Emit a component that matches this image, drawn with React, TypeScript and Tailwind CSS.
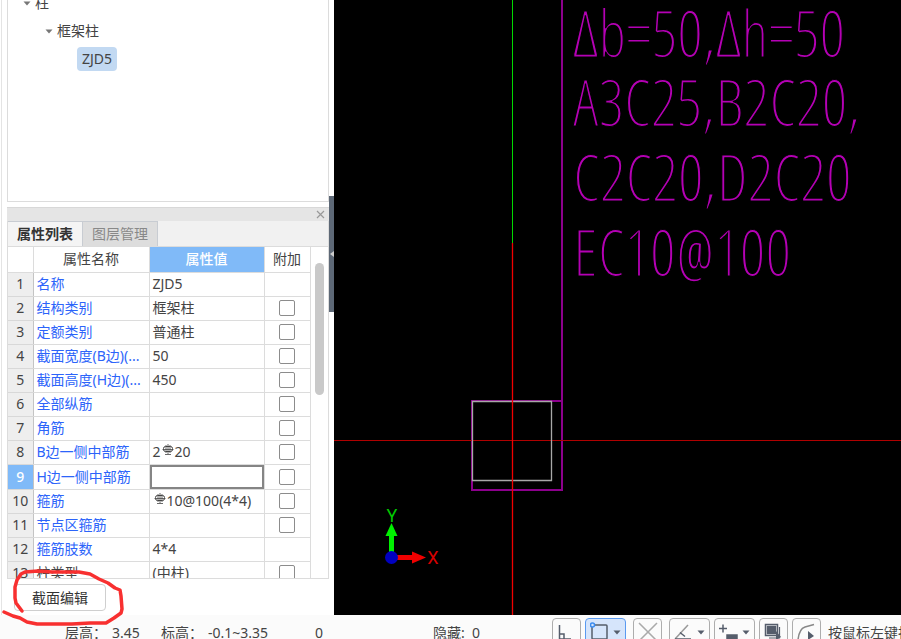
import type { ReactNode } from 'react';

interface PropertyRow {
  name: string;
  value?: string;
  rebar?: [string, string];
  check?: boolean;
  plain?: boolean;
}

const rows: PropertyRow[] = [
  { name: '名称', value: 'ZJD5' },
  { name: '结构类别', value: '框架柱', check: true },
  { name: '定额类别', value: '普通柱', check: true },
  { name: '截面宽度(B边)(...', value: '50', check: true },
  { name: '截面高度(H边)(...', value: '450', check: true },
  { name: '全部纵筋', check: true },
  { name: '角筋', check: true },
  { name: 'B边一侧中部筋', rebar: ['2', '20'], check: true },
  { name: 'H边一侧中部筋', check: true },
  { name: '箍筋', rebar: ['', '10@100(4*4)'], check: true },
  { name: '节点区箍筋', check: true },
  { name: '箍筋肢数', value: '4*4' },
  { name: '柱类型', value: '(中柱)', check: true, plain: true },
];

const SELECTED = 8;

const notes = [
  { text: 'Δb=50,Δh=50', y: 57 },
  { text: 'A3C25,B2C20,', y: 126 },
  { text: 'C2C20,D2C20', y: 201 },
  { text: 'EC10@100', y: 276 },
];

const Caret = ({ className = '' }: { className?: string }) => (
  <svg className={`shrink-0 ${className}`} width="8" height="5" viewBox="0 0 8 5">
    <path d="M0.5 0.5h7L4 4.5z" fill="currentColor" />
  </svg>
);

const RebarIcon = () => (
  <svg className="mb-1.5 inline-block" width="14" height="12" viewBox="0 0 14 12" fill="none" stroke="#444">
    <path d="M4.5 2.5h5a2 2 0 0 1 2 2v1a2 2 0 0 1-2 2h-5a2 2 0 0 1-2-2v-1a2 2 0 0 1 2-2z" />
    <path d="M7 0v10M5 1v8M9 1v8M1.5 5.5h11M4 10.5h6" strokeWidth="0.8" />
  </svg>
);

const TreePanel = () => (
  <div className="h-[202px] shrink-0 overflow-hidden border border-t-0 border-[#dcdcdc] bg-white text-sm text-[#444]">
    <ul className="-mt-[11px]">
      <li>
        <div className="flex h-7 items-center gap-1 pl-[15px]">
          <Caret className="text-[#777]" />
          柱
        </div>
        <ul>
          <li>
            <div className="flex h-7 items-center gap-1 pl-[37px]">
              <Caret className="text-[#777]" />
              框架柱
            </div>
            <ul>
              <li className="flex h-7 items-center pl-[69px]">
                <button className="h-6 w-10 rounded-sm bg-[#c2d9f2] text-center">ZJD5</button>
              </li>
            </ul>
          </li>
        </ul>
      </li>
    </ul>
  </div>
);

const PropertyTable = () => (
  <div className="flex min-h-0 flex-1 overflow-hidden border border-t-0 border-[#dcdcdc] bg-white">
    <table className="w-[302px] shrink-0 table-fixed border-collapse self-start text-sm leading-5 text-[#444]">
      <colgroup>
        <col className="w-[25px]" />
        <col className="w-[116px]" />
        <col className="w-[115px]" />
        <col className="w-[46px]" />
      </colgroup>
      <thead>
        <tr className="h-[25px]">
          <th className="border-r border-b border-[#dcdcdc]" />
          <th className="border-r border-b border-[#dcdcdc] p-0 font-normal">属性名称</th>
          <th className="border-r border-b border-[#dcdcdc] bg-[#80baf8] p-0 font-medium text-white">属性值</th>
          <th className="border-r border-b border-[#dcdcdc] p-0 font-normal">附加</th>
        </tr>
      </thead>
      <tbody>
        {rows.map((row, i) => (
          <tr key={row.name} className="h-6">
            <td className={`border-r border-b border-r-[#c4c4c4] border-b-[#d8d8d8] p-0 text-center ${i === SELECTED ? 'bg-[#80baf8] font-medium text-white' : 'bg-[#eeeeee]'}`}>
              {i + 1}
            </td>
            <td className={`border-r border-b border-[#dcdcdc] py-0 pr-0 pl-[3px] whitespace-nowrap ${row.plain ? '' : 'text-[#2c64fa]'}`}>
              {row.name}
            </td>
            <td className="border-r border-b border-[#dcdcdc] p-0 whitespace-nowrap">
              {i === SELECTED ? (
                <input aria-label={row.name} className="block h-6 w-full border-2 border-[#858585] bg-white px-1 outline-none" />
              ) : (
                <span className="pl-[3px]">
                  {row.rebar ? (
                    <>
                      {row.rebar[0]}
                      <RebarIcon />
                      {row.rebar[1]}
                    </>
                  ) : (
                    row.value
                  )}
                </span>
              )}
            </td>
            <td className="border-r border-b border-[#dcdcdc] p-0">
              {row.check && (
                <input
                  type="checkbox"
                  aria-label={`附加 ${row.name}`}
                  className="mx-auto block size-4 appearance-none rounded-xs border border-[#8c8c8c] bg-white"
                />
              )}
            </td>
          </tr>
        ))}
      </tbody>
    </table>
    <div className="flex flex-1 justify-center pt-4">
      <div className="h-[132px] w-[9px] rounded-full bg-[#c9c9c9]" />
    </div>
  </div>
);

const PropertyPanel = () => (
  <section className="mt-[5px] flex min-h-0 flex-1 flex-col">
    <div className="flex h-3.5 shrink-0 items-center justify-end border-t border-[#d8d8d8] bg-[#e5e5e5] pr-1">
      <button aria-label="关闭" className="text-[#999]">
        <svg width="9" height="9" viewBox="0 0 9 9" stroke="currentColor" strokeWidth="1.2">
          <path d="M1 1l7 7M8 1l-7 7" />
        </svg>
      </button>
    </div>
    <div className="flex h-[26px] shrink-0 border-x border-b border-[#dcdcdc] bg-[#f1f1f1] text-sm">
      <button className="w-[75px] border-t border-r border-[#c8ccd2] bg-[#f4f4f4] font-semibold text-[#333]">属性列表</button>
      <button className="w-[75px] border-t border-r border-[#c8ccd2] bg-[#dddddd] text-[#888]">图层管理</button>
    </div>
    <PropertyTable />
  </section>
);

const Drawing = () => (
  <main className="relative min-w-0 flex-1 bg-black">
    <svg className="absolute inset-0 size-full" fill="none">
      <path d="M228 0V490H138V401H228" stroke="#8c008c" strokeWidth="2" />
      <path d="M0 440.5H2000" stroke="#b00000" />
      <path d="M138.5 401.5h79v79h-79z" stroke="#a8a8a8" strokeWidth="1.3" />
      <path d="M178.5 0V243" stroke="#00d800" />
      <path d="M178.5 243V2000" stroke="#f00000" strokeWidth="1.3" />

      <g className="font-['Open_Sans_Condensed_Light','Open_Sans',sans-serif] text-[64px]" fill="#b400b4" stroke="#000" strokeWidth="1.2">
        {notes.map((note) => (
          <text key={note.y} x="239" y={note.y}>
            {note.text}
          </text>
        ))}
      </g>

      <path d="M57.5 553v-18" stroke="#00f000" strokeWidth="5" />
      <path d="M51.5 536h12l-6-13z" fill="#00f000" />
      <path d="M62 557.5h16" stroke="#f00000" strokeWidth="5" />
      <path d="M78 551.5v12l14-6z" fill="#f00000" />
      <circle cx="57.5" cy="557.5" r="6.5" fill="#0000c0" />
      <g className="font-['Roboto',sans-serif] text-lg" textAnchor="middle">
        <text x="58" y="522" fill="#00c800">Y</text>
        <text x="99" y="564" fill="#d80000">X</text>
      </g>
    </svg>
  </main>
);

interface ToolProps {
  label: string;
  active?: boolean;
  menu?: boolean;
  children: ReactNode;
}

const Tool = ({ label, active, menu, children }: ToolProps) => (
  <button
    aria-label={label}
    className={`flex h-7 shrink-0 items-center justify-between rounded-sm border px-1 text-[#555d6b] ${menu ? 'w-[41px]' : 'w-[29px]'} ${active ? 'border-[#5a9af0] bg-[#d6e5fb]' : 'border-[#adadad] bg-[#fbfbfb]'}`}
  >
    <svg className="shrink-0" width="20" height="20" viewBox="0 0 20 20" fill="none" stroke="currentColor" strokeWidth="1.5">
      {children}
    </svg>
    {menu && <Caret className="-ml-1" />}
  </button>
);

const StatusBar = () => (
  <footer className="flex h-6 shrink-0 items-start overflow-hidden bg-[#fbfbfb] text-sm whitespace-nowrap text-[#444]">
    <div className="flex w-[552px] shrink-0 pt-2 pl-[65px] leading-5">
      <span className="w-[47px]">层高：</span>
      <span className="w-[49px]">3.45</span>
      <span className="w-[47px]">标高：</span>
      <span className="w-[107px]">-0.1~3.35</span>
      <span className="w-[118px]">0</span>
      <span>隐藏:&nbsp; 0</span>
    </div>
    <div className="flex shrink-0 pt-[3px]">
      <div className="flex gap-1">
        <Tool label="正交">
          <path d="M2.5 3v14H14M2.5 12H7v5" />
        </Tool>
        <Tool label="对象捕捉" active menu>
          <rect x="2" y="3" width="15" height="14" rx="1" />
          <circle cx="2.5" cy="3" r="2" fill="#d6e5fb" stroke="#3b8cf0" />
        </Tool>
      </div>
      <div className="flex gap-[7px] pl-[7px]">
        <Tool label="交点">
          <path d="M1 1l18 18M19 1L1 19" stroke="#aaa" />
        </Tool>
        <Tool label="角度" menu>
          <path d="M1 17L14 3" stroke="#999" />
          <path d="M6 10.5l5 4M1 17h16" />
        </Tool>
      </div>
      <div className="flex gap-1 pl-1">
        <Tool label="偏移" menu>
          <path d="M0 6.5h8M4 2.5v8" />
          <path d="M8 13h10v5H8z" fill="currentColor" />
        </Tool>
        <Tool label="图层">
          <path d="M1.5 2.5h12v11h-12z" />
          <path d="M3.5 4.5h8v7h-8z" fill="currentColor" />
          <path d="M15.5 5v11H5" strokeWidth="1.2" />
          <path d="M12 9v9l5-3z" fill="currentColor" stroke="none" />
        </Tool>
        <Tool label="折线">
          <path d="M1 18Q2 7 8 5L17 2.5" stroke="#888" />
          <path d="M11 9v9l6-4z" fill="currentColor" stroke="none" />
        </Tool>
      </div>
      <span className="pt-[5px] pl-[7px] leading-5">按鼠标左键指定第一个角点</span>
    </div>
  </footer>
);

export default function App() {
  return (
    <div className="flex h-screen flex-col overflow-hidden bg-white font-['Noto_Sans','Noto_Sans_CJK_SC',sans-serif]">
      <div className="flex min-h-0 flex-1">
        <aside className="flex w-[334px] shrink-0">
          <div className="ml-px flex min-w-0 flex-1 flex-col border-l border-[#e4e4e4] pl-[5px]">
            <TreePanel />
            <PropertyPanel />
            <div className="relative flex h-9 shrink-0 items-start pt-[5px] pl-[7px]">
              <button className="h-[27px] w-[92px] rounded-sm border border-[#cfcfcf] bg-white text-sm text-[#333]">截面编辑</button>
              {/* red pen mark around the button */}
              <svg className="pointer-events-none absolute -top-5 -left-[7px] z-10" width="130" height="70" viewBox="0 0 130 70" fill="none" stroke="#f83030" strokeWidth="3.5" strokeLinecap="round" strokeLinejoin="round">
                <path d="M22 52L16 44L15 39V28L17 21L21 15L25 13L38 12L52 13H66L79 13L90 15L99 20L108 24L115 29L120 31L121 37L122 50L121 54L114 59L106 64H90L72 65H37L27 63L20 59L13 57L4 53" />
              </svg>
            </div>
          </div>
          <div className="w-[5px] shrink-0 pt-[196px]">
            <button aria-label="收起面板" className="flex h-[116px] w-[5px] items-center justify-center bg-[#5d6876]">
              <svg className="shrink-0" width="4" height="6" viewBox="0 0 4 6">
                <path d="M4 0v6L0 3z" fill="#ccc" />
              </svg>
            </button>
          </div>
        </aside>
        <Drawing />
      </div>
      <StatusBar />
    </div>
  );
}
